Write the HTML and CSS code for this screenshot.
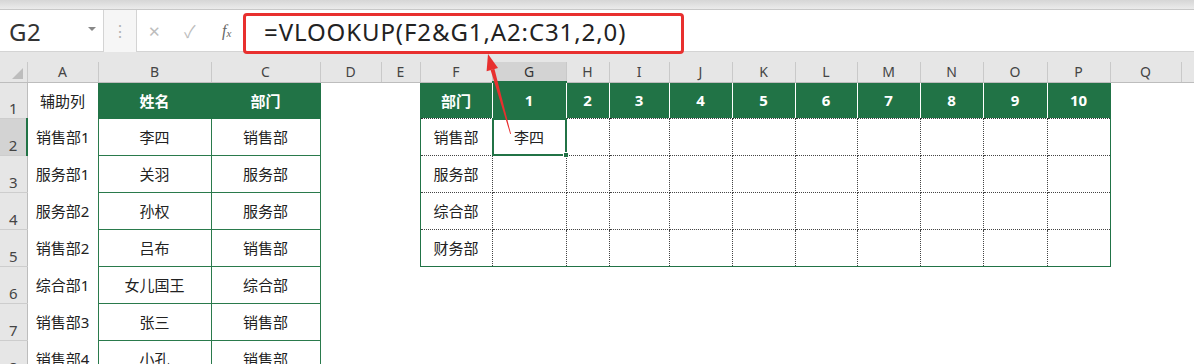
FILE: index.html
```html
<!DOCTYPE html>
<html lang="zh-CN">
<head>
    <meta charset="UTF-8">
    <title>VLOOKUP 多条件查找</title>
    <link rel="stylesheet" href="styles.css">
</head>
<body>
    <div class="app">
        <div class="ribbon-edge"></div>

        <!-- Formula bar -->
        <div class="formula-row">
            <div class="name-box">
                <span class="name-ref">G2</span>
                <span class="name-drop"></span>
            </div>
            <div class="grip">⋮</div>
            <div class="formula-box">
                <div class="fx-buttons">
                    <span class="fx-btn cancel">✕</span>
                    <span class="fx-btn enter">✓</span>
                    <span class="fx-btn fx"><i>f</i><sub>x</sub></span>
                </div>
                <div class="formula-text">=VLOOKUP(F2&amp;G1,A2:C31,2,0)</div>
            </div>
        </div>
        <div class="header-gap"></div>

        <!-- Sheet -->
        <table class="sheet">
            <colgroup>
                <col class="w-rh"><col class="w-a"><col class="w-b"><col class="w-c"><col class="w-d"><col class="w-e">
                <col class="w-f"><col class="w-g"><col class="w-h"><col class="w-i"><col class="w-std"><col class="w-std">
                <col class="w-l"><col class="w-std"><col class="w-std"><col class="w-o"><col class="w-std"><col class="w-q"><col class="w-r">
            </colgroup>
            <thead>
                <tr class="col-head">
                    <th class="corner"><span class="corner-tri"></span></th>
                    <th>A</th><th>B</th><th>C</th><th>D</th><th>E</th><th>F</th><th class="active">G</th>
                    <th>H</th><th>I</th><th>J</th><th>K</th><th>L</th><th>M</th><th>N</th><th>O</th><th>P</th><th>Q</th><th></th>
                </tr>
            </thead>
            <tbody>
                <tr class="r1">
                    <th class="row-num">1</th>
                    <td>辅助列</td><td class="lt-head">姓名</td><td class="lt-head">部门</td><td></td><td></td>
                    <td class="rt-head left-edge">部门</td><td class="rt-head">1</td><td class="rt-head">2</td><td class="rt-head">3</td>
                    <td class="rt-head">4</td><td class="rt-head">5</td><td class="rt-head">6</td><td class="rt-head">7</td>
                    <td class="rt-head">8</td><td class="rt-head">9</td><td class="rt-head right-edge">10</td><td></td><td></td>
                </tr>
                <tr>
                    <th class="row-num active">2</th>
                    <td>销售部1</td><td class="lt">李四</td><td class="lt">销售部</td><td></td><td></td>
                    <td class="rt left-edge">销售部</td>
                    <td class="rt selected">李四<span class="sel-frame"><span class="sel-handle"></span></span></td>
                    <td class="rt"></td><td class="rt"></td><td class="rt"></td><td class="rt"></td><td class="rt"></td>
                    <td class="rt"></td><td class="rt"></td><td class="rt"></td><td class="rt right-edge"></td><td></td><td></td>
                </tr>
                <tr>
                    <th class="row-num">3</th>
                    <td>服务部1</td><td class="lt">关羽</td><td class="lt">服务部</td><td></td><td></td>
                    <td class="rt left-edge">服务部</td><td class="rt"></td>
                    <td class="rt"></td><td class="rt"></td><td class="rt"></td><td class="rt"></td><td class="rt"></td>
                    <td class="rt"></td><td class="rt"></td><td class="rt"></td><td class="rt right-edge"></td><td></td><td></td>
                </tr>
                <tr>
                    <th class="row-num">4</th>
                    <td>服务部2</td><td class="lt">孙权</td><td class="lt">服务部</td><td></td><td></td>
                    <td class="rt left-edge">综合部</td><td class="rt"></td>
                    <td class="rt"></td><td class="rt"></td><td class="rt"></td><td class="rt"></td><td class="rt"></td>
                    <td class="rt"></td><td class="rt"></td><td class="rt"></td><td class="rt right-edge"></td><td></td><td></td>
                </tr>
                <tr>
                    <th class="row-num">5</th>
                    <td>销售部2</td><td class="lt">吕布</td><td class="lt">销售部</td><td></td><td></td>
                    <td class="rt left-edge bottom-edge">财务部</td><td class="rt bottom-edge"></td>
                    <td class="rt bottom-edge"></td><td class="rt bottom-edge"></td><td class="rt bottom-edge"></td><td class="rt bottom-edge"></td><td class="rt bottom-edge"></td>
                    <td class="rt bottom-edge"></td><td class="rt bottom-edge"></td><td class="rt bottom-edge"></td><td class="rt right-edge bottom-edge"></td><td></td><td></td>
                </tr>
                <tr>
                    <th class="row-num">6</th>
                    <td>综合部1</td><td class="lt">女儿国王</td><td class="lt">综合部</td>
                    <td></td><td></td><td></td><td></td><td></td><td></td><td></td><td></td><td></td><td></td><td></td><td></td><td></td><td></td><td></td>
                </tr>
                <tr>
                    <th class="row-num">7</th>
                    <td>销售部3</td><td class="lt">张三</td><td class="lt">销售部</td>
                    <td></td><td></td><td></td><td></td><td></td><td></td><td></td><td></td><td></td><td></td><td></td><td></td><td></td><td></td><td></td>
                </tr>
                <tr>
                    <th class="row-num">8</th>
                    <td>销售部4</td><td class="lt">小孔</td><td class="lt">销售部</td>
                    <td></td><td></td><td></td><td></td><td></td><td></td><td></td><td></td><td></td><td></td><td></td><td></td><td></td><td></td><td></td>
                </tr>
            </tbody>
        </table>

        <!-- Annotation: red box round the formula and arrow to the result cell -->
        <div class="formula-highlight"></div>
        <svg class="arrow" width="1194" height="364" viewBox="0 0 1194 364">
            <polygon points="510.2,134 511,134 494.4,68.8 490.6,69.9" fill="#e8302f"/>
            <polygon points="488,54 498,68 486.6,71.2" fill="#e8302f"/>
        </svg>
    </div>
</body>
</html>
```

FILE: styles.css
```css
* {
    margin: 0;
    padding: 0;
    box-sizing: border-box;
}

body {
    font-family: "Noto Sans", "Noto Sans CJK SC", sans-serif;
    background: #fff;
    color: #222;
    overflow: hidden;
}

.app {
    position: relative;
    width: 1194px;
    height: 364px;
    overflow: hidden;
}

.ribbon-edge {
    height: 10px;
    background: linear-gradient(#d6d6d6, #ebebeb);
    border-bottom: 1px solid #c8c8c8;
}

/* Formula bar */
.formula-row {
    display: flex;
    align-items: stretch;
    height: 42px;
    background: #f6f6f6;
}

.name-box {
    width: 104px;
    display: flex;
    align-items: center;
    justify-content: space-between;
    background: #fff;
    border: 1px solid #d4d4d4;
    border-left: none;
    border-top: none;
    padding: 0 7px 0 9px;
}

.name-ref {
    font-size: 24px;
    color: #333;
    letter-spacing: 0.5px;
    margin-top: 1px;
}

.name-drop {
    width: 0;
    height: 0;
    border-left: 4px solid transparent;
    border-right: 4px solid transparent;
    border-top: 4px solid #888;
    margin-bottom: 3px;
}

.grip {
    width: 32px;
    display: flex;
    align-items: center;
    justify-content: center;
    color: #b3b3b3;
    font-size: 16px;
}

.formula-box {
    flex: 1;
    display: flex;
    align-items: center;
    background: #fff;
    border: 1px solid #d4d4d4;
    border-top: none;
    border-right: none;
}

.fx-buttons {
    display: flex;
    align-items: center;
    width: 109px;
    padding-left: 11px;
}

.fx-btn {
    color: #bdbdbd;
    font-size: 17px;
}

.fx-btn.cancel {
    width: 36px;
    font-size: 15px;
}

.fx-btn.enter {
    width: 38px;
}

.fx-btn.fx {
    color: #666;
    font-family: "Liberation Serif", serif;
    font-size: 16px;
}

.fx-btn.fx sub {
    font-size: 11px;
    font-style: italic;
    vertical-align: -1px;
}

.formula-text {
    padding-left: 18px;
    font-size: 24px;
    color: #222;
    letter-spacing: 0.9px;
    margin-top: 2px;
}

.header-gap {
    height: 10px;
    background: #e6e6e6;
}

/* Sheet grid */
.sheet {
    width: 1194px;
    table-layout: fixed;
    border-collapse: collapse;
    font-size: 15px;
}

.w-rh { width: 27px; }
.w-a { width: 71px; }
.w-b { width: 113px; }
.w-c { width: 109px; }
.w-d { width: 61px; }
.w-e { width: 39px; }
.w-f { width: 72px; }
.w-g { width: 74px; }
.w-h { width: 43px; }
.w-i { width: 60px; }
.w-std { width: 63px; }
.w-l { width: 62px; }
.w-o { width: 64px; }
.w-q { width: 71px; }
.w-r { width: 13px; }

.col-head th {
    height: 20px;
    background: #e6e6e6;
    border-left: 1px solid #c9c9c9;
    border-bottom: 1px solid #bdbdbd;
    font-weight: normal;
    font-size: 14px;
    color: #444;
    line-height: 18px;
    padding-top: 1px;
}

.col-head th.active {
    background: #d3d3d3;
    border-bottom: 2px solid #217346;
    color: #333;
}

.col-head th.corner {
    position: relative;
    border-left: none;
}

.corner-tri {
    position: absolute;
    right: 4px;
    bottom: 3px;
    width: 0;
    height: 0;
    border-left: 11px solid transparent;
    border-bottom: 11px solid #bdbdbd;
}

tbody tr {
    height: 37px;
}

tbody tr.r1 {
    height: 36px;
}

td {
    text-align: center;
    vertical-align: middle;
    white-space: nowrap;
    overflow: hidden;
    padding: 0;
}

.row-num {
    background: #e6e6e6;
    border-bottom: 1px solid #cdcdcd;
    border-right: 1px solid #bdbdbd;
    font-weight: normal;
    font-size: 15px;
    color: #444;
    vertical-align: bottom;
    line-height: 18px;
    padding-bottom: 1px;
}

.row-num.active {
    background: #d3d3d3;
    border-right: 2px solid #217346;
}

/* Lookup source table */
.lt-head {
    background: #217346;
    color: #fff;
    font-weight: bold;
    border: 1px solid #217346;
}

.lt {
    border: 1px solid #2a7a4c;
}

/* Result table */
.rt-head {
    background: #217346;
    color: #fff;
    font-weight: bold;
    border-left: 1px dotted #fff;
    border-right: 1px dotted #fff;
    border-top: 1px solid #217346;
    border-bottom: 1px dotted #333;
}

.rt {
    border: 1px dotted #444;
}

.left-edge {
    border-left: 1px solid #217346;
}

.right-edge {
    border-right: 1px solid #217346;
}

.bottom-edge {
    border-bottom: 1px solid #217346;
}

.selected {
    position: relative;
    overflow: visible;
}

.sel-frame {
    position: absolute;
    left: -1px;
    top: -1px;
    right: -1px;
    bottom: -1px;
    border: 2px solid #217346;
}

.sel-handle {
    position: absolute;
    right: -4px;
    bottom: -4px;
    width: 6px;
    height: 6px;
    background: #217346;
    border: 1px solid #fff;
}

/* Annotation overlay */
.formula-highlight {
    position: absolute;
    left: 243px;
    top: 13px;
    width: 441px;
    height: 41px;
    border: 3px solid #e8302f;
    border-radius: 4px;
}

.arrow {
    position: absolute;
    left: 0;
    top: 0;
    pointer-events: none;
}
```
